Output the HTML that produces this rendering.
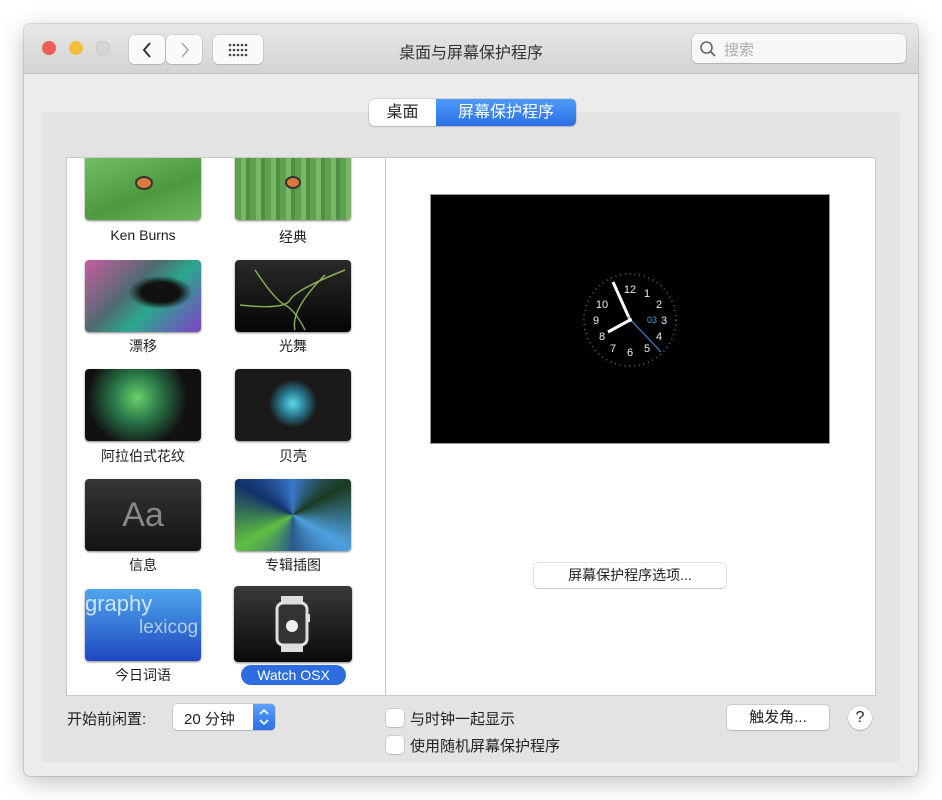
<!DOCTYPE html>
<html><head><meta charset="utf-8"><style>
*{margin:0;padding:0;box-sizing:border-box}
body{width:942px;height:800px;background:#fff;font-family:"Liberation Sans","Noto Sans CJK SC",sans-serif;position:relative;overflow:hidden;color:#222}
.win{position:absolute;left:24px;top:24px;width:894px;height:752px;background:#ececec;border-radius:6px;box-shadow:0 6px 24px rgba(0,0,0,.25),0 0 0 1px rgba(0,0,0,.12);overflow:hidden}
.tb{position:absolute;left:0;top:0;width:100%;height:50px;background:linear-gradient(#e8e8e8,#d3d3d3);border-bottom:1px solid #c0c0c0}
.dot{position:absolute;top:17px;width:14px;height:14px;border-radius:50%}
.btn{position:absolute;background:#fafafa;border-radius:5px;box-shadow:0 0 0 .5px rgba(0,0,0,.15),0 1px 1px rgba(0,0,0,.1)}
.abs{position:absolute}
.thumb{position:absolute;width:116px;height:72px;border-radius:4px;box-shadow:0 1px 2px rgba(0,0,0,.5);overflow:hidden}
.lbl{position:absolute;width:150px;text-align:center;font-size:14px;color:#222}
.cb{position:absolute;width:18px;height:18px;background:#fff;border-radius:4px;box-shadow:0 0 0 .5px rgba(0,0,0,.2),0 1px 1px rgba(0,0,0,.1)}
</style></head><body>
<div class="win">
 <div class="tb">
  <div class="dot" style="left:18px;background:#ec5f57"></div>
  <div class="dot" style="left:45px;background:#f3bd3f"></div>
  <div class="dot" style="left:72px;background:#d5d5d5;box-shadow:inset 0 0 0 .5px #bbb"></div>
  <div class="btn" style="left:105px;top:11px;width:36px;height:29px"></div>
  <div class="btn" style="left:142px;top:11px;width:36px;height:29px"></div>
  <svg class="abs" style="left:117px;top:17px" width="12" height="18"><path d="M9 2L3 9l6 7" stroke="#333" stroke-width="2" fill="none"/></svg>
  <svg class="abs" style="left:155px;top:17px" width="12" height="18"><path d="M3 2l6 7-6 7" stroke="#aaa" stroke-width="1.6" fill="none"/></svg>
  <div class="btn" style="left:189px;top:11px;width:50px;height:29px"></div>
  <svg class="abs" style="left:204px;top:19px" width="20" height="14" fill="#444"><g>
   <circle cx="2" cy="2" r="1.3"/><circle cx="6" cy="2" r="1.3"/><circle cx="10" cy="2" r="1.3"/><circle cx="14" cy="2" r="1.3"/><circle cx="18" cy="2" r="1.3"/>
   <circle cx="2" cy="7" r="1.3"/><circle cx="6" cy="7" r="1.3"/><circle cx="10" cy="7" r="1.3"/><circle cx="14" cy="7" r="1.3"/><circle cx="18" cy="7" r="1.3"/>
   <circle cx="2" cy="12" r="1.3"/><circle cx="6" cy="12" r="1.3"/><circle cx="10" cy="12" r="1.3"/><circle cx="14" cy="12" r="1.3"/><circle cx="18" cy="12" r="1.3"/></g></svg>
  <div class="abs" style="left:0;width:100%;top:15px;text-align:center;font-size:16px;color:#333">桌面与屏幕保护程序</div>
  <div class="btn" style="left:668px;top:10px;width:214px;height:29px;background:#f7f7f7"></div>
  <svg class="abs" style="left:675px;top:16px" width="18" height="18"><circle cx="7.5" cy="7.5" r="5.5" stroke="#666" stroke-width="1.6" fill="none"/><path d="M11.5 11.5l4.5 4.5" stroke="#666" stroke-width="1.8"/></svg>
  <div class="abs" style="left:700px;top:15px;font-size:15px;color:#aaa">搜索</div>
 </div>
 <div class="abs" style="left:17px;top:88px;width:859px;height:650px;background:#e3e3e3;border-radius:4px"></div>
 <div class="abs" style="left:345px;top:75px;width:207px;height:27px;border-radius:5px;background:#fff;box-shadow:0 0 0 .5px rgba(0,0,0,.2),0 1px 1px rgba(0,0,0,.12);overflow:hidden">
  <div class="abs" style="left:0;top:0;width:67px;height:27px;text-align:center;line-height:27px;font-size:16px">桌面</div>
  <div class="abs" style="left:67px;top:0;width:140px;height:27px;text-align:center;line-height:27px;font-size:16px;background:linear-gradient(#4f9af7,#2a6fe6);color:#fff">屏幕保护程序</div>
 </div>
 <div class="abs" style="left:43px;top:134px;width:318px;height:537px;background:#fff;box-shadow:0 0 0 1px #c9c9c9"></div>
 <div class="abs" style="left:362px;top:134px;width:489px;height:537px;background:#fff;box-shadow:0 0 0 1px #c9c9c9"></div>
</div>
<!-- row1 clipped -->
<div class="abs" style="left:67px;top:158px;width:317px;height:70px;overflow:hidden">
<div class="thumb" style="left:18px;top:-10px;background:linear-gradient(160deg,#7cc36a,#4d9a3e 60%,#6bb55a)"><div class="abs" style="left:50px;top:28px;width:18px;height:14px;border-radius:50%;background:#d77a3a;border:2px solid #333"></div></div>
<div class="thumb" style="left:168px;top:-10px;background:repeating-linear-gradient(90deg,#5ea150 0 6px,#78b867 6px 11px,#4f9042 11px 15px)"><div class="abs" style="left:50px;top:28px;width:16px;height:13px;border-radius:50%;background:#d77a3a;border:2px solid #333"></div></div>
</div>
<div class="lbl" style="left:68px;top:227px">Ken Burns</div>
<div class="lbl" style="left:218px;top:227px">经典</div>
<div class="thumb" style="left:85px;top:260px;background:radial-gradient(ellipse at 65% 45%,#111 18%,transparent 30%),linear-gradient(135deg,#c85da0,#4d6b70 40%,#2aa88d 60%,#8040c8)"></div>
<div class="thumb" style="left:235px;top:260px;background:linear-gradient(#2a2a2a,#050505)"><svg width="116" height="72"><path d="M5 45Q50 50 55 40T110 10M20 10Q40 40 50 45T70 70M60 70Q55 50 90 15" stroke="#9fd460" stroke-width="1.5" fill="none" opacity=".8"/></svg></div>
<div class="lbl" style="left:68px;top:336px">漂移</div>
<div class="lbl" style="left:218px;top:336px">光舞</div>
<div class="thumb" style="left:85px;top:369px;background:radial-gradient(circle at 45% 40%,#6ad06a 0,#2a7a4a 30%,#111 65%)"></div>
<div class="thumb" style="left:235px;top:369px;background:radial-gradient(circle at 50% 48%,#5ad8e8 0,#2a7a90 18%,#1a1a1a 35%),linear-gradient(#2a2a2a,#050505)"></div>
<div class="lbl" style="left:68px;top:446px">阿拉伯式花纹</div>
<div class="lbl" style="left:218px;top:446px">贝壳</div>
<div class="thumb" style="left:85px;top:479px;background:linear-gradient(#353535,#141414);color:#888;font-size:34px;text-align:center;line-height:72px">Aa</div>
<div class="thumb" style="left:235px;top:479px;background:conic-gradient(from 0deg,#3a78c8,#1b3a20,#4fa0e0,#2a5a8a,#60c040,#12306a,#3a78c8)"></div>
<div class="lbl" style="left:68px;top:555px">信息</div>
<div class="lbl" style="left:218px;top:555px">专辑插图</div>
<div class="thumb" style="left:85px;top:589px;background:linear-gradient(#4ea6ec,#1e48c0);color:#cfe4fb;font-size:22px;line-height:22px;padding-top:4px">graphy<br><span style="margin-left:54px;font-size:19px;color:#b0cdf0">lexicog</span></div>
<div class="thumb" style="left:234px;top:586px;width:118px;height:76px;background:linear-gradient(#3a3a3a,#0a0a0a)"><svg width="118" height="76"><rect x="47" y="10" width="22" height="8" fill="#ddd"/><rect x="47" y="58" width="22" height="8" fill="#ddd"/><rect x="43" y="17" width="30" height="42" rx="6" fill="#333" stroke="#ddd" stroke-width="3"/><rect x="73" y="28" width="3" height="8" fill="#ddd"/><circle cx="58" cy="40" r="6" fill="#eee"/></svg></div>
<div class="lbl" style="left:68px;top:665px">今日词语</div>
<div class="abs" style="left:241px;top:665px;width:105px;height:20px;border-radius:10px;background:#2d6ddf;color:#fff;font-size:14px;text-align:center;line-height:20px">Watch OSX</div>
<!-- preview -->
<div class="abs" style="left:431px;top:195px;width:398px;height:248px;background:#000;box-shadow:0 0 0 1px #999"></div>
<svg class="abs" style="left:580px;top:270px" width="100" height="100" font-family="Liberation Sans" font-size="11" fill="#eee" text-anchor="middle">
 <circle cx="50" cy="50" r="46" fill="none" stroke="#555" stroke-width="2" stroke-dasharray="1 3.8"/>
 <text x="50" y="23">12</text><text x="67" y="27">1</text><text x="79" y="38">2</text><text x="84" y="54">3</text><text x="79" y="70">4</text><text x="67" y="82">5</text><text x="50" y="86">6</text><text x="33" y="82">7</text><text x="22" y="70">8</text><text x="16" y="54">9</text><text x="22" y="38">10</text>
 <text x="72" y="53" font-size="9" fill="#4aa0e0">03</text>
 <path d="M50 50L33 12" stroke="#fff" stroke-width="3"/><path d="M50 50L28 62" stroke="#fff" stroke-width="3"/><path d="M48 47L81 82" stroke="#3a7ab0" stroke-width="1.3"/>
 <circle cx="50" cy="50" r="2" fill="#fff"/>
</svg>
<div class="abs" style="left:534px;top:563px;width:192px;height:25px;background:#fff;border-radius:4px;box-shadow:0 0 0 .5px rgba(0,0,0,.25),0 1px 1px rgba(0,0,0,.12);text-align:center;line-height:25px;font-size:14px">屏幕保护程序选项...</div>
<!-- bottom -->
<div class="abs" style="left:67px;top:708px;font-size:15px">开始前闲置:</div>
<div class="abs" style="left:173px;top:704px;width:102px;height:26px;background:#fff;border-radius:4px;box-shadow:0 0 0 .5px rgba(0,0,0,.2),0 1px 1px rgba(0,0,0,.1);overflow:hidden"><div class="abs" style="left:11px;top:4px;font-size:15px">20 分钟</div><div class="abs" style="right:0;top:0;width:22px;height:26px;background:linear-gradient(#5ba0f7,#2b6fe6)"><svg width="22" height="26"><path d="M7 10l4-4 4 4M7 16l4 4 4-4" stroke="#fff" stroke-width="1.6" fill="none"/></svg></div></div>
<div class="cb" style="left:386px;top:709px"></div>
<div class="abs" style="left:410px;top:708px;font-size:15px">与时钟一起显示</div>
<div class="cb" style="left:386px;top:736px"></div>
<div class="abs" style="left:410px;top:735px;font-size:15px">使用随机屏幕保护程序</div>
<div class="abs" style="left:727px;top:705px;width:102px;height:25px;background:#fff;border-radius:4px;box-shadow:0 0 0 .5px rgba(0,0,0,.2),0 1px 1px rgba(0,0,0,.12);text-align:center;line-height:25px;font-size:15px">触发角...</div>
<div class="abs" style="left:848px;top:706px;width:24px;height:24px;border-radius:50%;background:#fff;box-shadow:0 0 0 .5px rgba(0,0,0,.2),0 1px 1px rgba(0,0,0,.15);text-align:center;line-height:24px;font-size:16px">?</div>
</body></html>
